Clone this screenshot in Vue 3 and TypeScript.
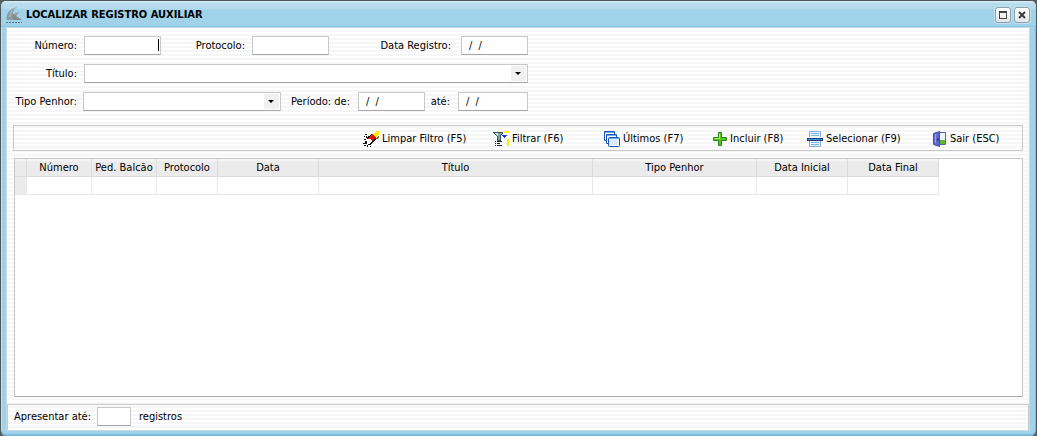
<script setup lang="ts">
interface Mask { id: string; label: string }
interface Column { name: string; width: number }

const columns: Column[] = [
  { name: 'Número', width: 65 },
  { name: 'Ped. Balcão', width: 65 },
  { name: 'Protocolo', width: 61 },
  { name: 'Data', width: 101 },
  { name: 'Título', width: 274 },
  { name: 'Tipo Penhor', width: 164 },
  { name: 'Data Inicial', width: 91 },
  { name: 'Data Final', width: 91 },
]
const periods: Mask[] = [
  { id: 'from', label: 'Período: de:' },
  { id: 'to', label: 'até:' },
]
</script>

<template>
  <main class="window">
    <header class="titlebar">
      <svg class="logo" width="18" height="18" viewBox="0 0 18 18" aria-hidden="true">
        <path d="M2 14C0 9 5 2 12 1C7 5 6 10 12 14Z" fill="#8e9ba1" />
        <path d="M5 11C5 6 8 3 12 1" fill="none" stroke="#b9c0c2" />
        <path d="M8 8l6-2-3 4 6 4H9C7 12 7 10 8 8Z" fill="#858a8c" />
        <path d="M9 9l4-2" stroke="#b8aaa2" />
        <path d="M1 16.500h16" stroke="#5f737c" stroke-dasharray="2 1" />
      </svg>
      <h1>LOCALIZAR REGISTRO AUXILIAR</h1>
      <button class="control" type="button" aria-label="Maximizar">
        <svg width="8" height="8" viewBox="0 0 8 8" shape-rendering="crispEdges"><path d="M.5.5h7v7h-7zM0 1.5h8" fill="none" stroke="#444" /></svg>
      </button>
      <button class="control" type="button" aria-label="Fechar">
        <svg width="8" height="8" viewBox="0 0 8 8"><path d="M1 1l6 6M7 1l-6 6" stroke="#3c3c3c" stroke-width="2" /></svg>
      </button>
    </header>

    <div class="body">
      <form class="filters" @submit.prevent>
        <div class="line">
          <label class="first" for="number">Número:</label>
          <span class="number"><input id="number" type="text"><i class="caret"></i></span>
          <label class="protocol-label" for="protocol">Protocolo:</label>
          <input id="protocol" class="protocol" type="text">
          <label class="date-label" for="date">Data Registro:</label>
          <input id="date" class="mask" type="text" value="/  /">
        </div>
        <div class="line">
          <label class="first" for="title">Título:</label>
          <span class="combo wide"><select id="title"><option></option></select></span>
        </div>
        <div class="line penhor">
          <label class="first" for="kind">Tipo Penhor:</label>
          <span class="combo kind"><select id="kind"><option></option></select></span>
          <template v-for="p in periods" :key="p.id">
            <label :class="p.id" :for="p.id">{{ p.label }}</label>
            <input :id="p.id" class="mask" type="text" value="/  /">
          </template>
        </div>
      </form>

      <div class="toolbar">
        <button class="clear" type="button">
          <svg width="16" height="16" viewBox="0 0 16 16" shape-rendering="crispEdges">
            <path d="M10 4l3-4h3v3l-3 4Z" fill="#ffee00" />
            <path d="M13 8l3-4v2l-2 3Z" fill="#6b5b00" />
            <path d="M5 7l5-4 3 4-5 4Z" fill="#e01010" />
            <path d="M4 8h3l2 2-2 4H5L3 11Z" fill="#fff" />
            <path d="M4 7.500L9.500 2.500M7 13.500l6-6M5 13.500h2" fill="none" stroke="#111" />
            <path d="M2 3h2v1H2zM1 5h1v1H1zM3 5h1v2H3zM1 8h2v1H1zM2 10h2v3H2zM0 12h2v1H0zM1 14h2v1H1zM4 14h1v2H4zM7 15h1v1H7z" fill="#111" />
          </svg>Limpar Filtro (F5)
        </button>
        <button class="filter" type="button">
          <svg width="16" height="16" viewBox="0 0 16 16" shape-rendering="crispEdges">
            <path d="M0 1h10L7 5v4H4V5Z" fill="#7aa3a3" />
            <path d="M2 2h3v4L2 3Z" fill="#d5e8e8" />
            <path d="M0 1.500h10M1 2l3 3v4h3V5l3-3" fill="none" stroke="#385858" />
            <path d="M9 4h5v1h-1v1h-1v1h-1V6h-1V5H9Z" fill="#2b3cc4" />
            <path d="M11 0h5v2h-5zM14 8h2v7h-2z" fill="#fff000" />
            <path d="M2 10.500h1M4 10.500h5M2 12.500h1M4 12.500h3M2 14.500h1M4 14.500h5" stroke="#222" />
          </svg>Filtrar (F6)
        </button>
        <button class="latest" type="button">
          <svg width="16" height="16" viewBox="0 0 16 16">
            <path d="M2 9.500H.5v-9h10V3" fill="#fff" stroke="#1c56b4" />
            <path d="M4 12.500H2.500v-9h10V6" fill="#fff" stroke="#1c56b4" />
            <path d="M1 1.500h9M3 4.500h9" stroke="#6aaced" />
            <rect x="4.500" y="6.500" width="11" height="9" rx="1" fill="#dcecff" stroke="#1c56b4" />
            <path d="M5 7.500h10" stroke="#6aaced" />
            <path d="M6 14.500h8V9" fill="none" stroke="#fff" />
          </svg>Últimos (F7)
        </button>
        <button class="add" type="button">
          <svg width="14" height="14" viewBox="0 0 14 14">
            <path d="M5.500.500h3v5h5v3h-5v5h-3v-5h-5v-3h5Z" fill="#57c51c" stroke="#248519" stroke-linejoin="round" />
            <path d="M6.500 1.500v5h-5" fill="none" stroke="#b2ef78" />
          </svg>Incluir (F8)
        </button>
        <button class="choose" type="button">
          <svg width="16" height="16" viewBox="0 0 16 16">
            <path d="M2.500 6V.500h11V6M2.500 10v5.500h11V10" fill="#e9f4ff" stroke="#85addf" />
            <path d="M4 2.500h8M4 4.500h8M4 11.500h8M4 13.500h8" stroke="#70b9ee" />
            <path d="M0 7h16v3H0z" fill="#123c7c" /><path d="M1 8.500h14" stroke="#4f91d3" />
          </svg>Selecionar (F9)
        </button>
        <button class="leave" type="button">
          <svg width="14" height="16" viewBox="0 0 14 16">
            <path d="M5.500 1.500h7v12h-7z" fill="#e9f5ff" stroke="#5260bd" />
            <path d="M7 9h5v4H7z" fill="#5cb82e" />
            <path d="M.500 2.500l6-2v15l-6-2Z" fill="#6268d2" stroke="#4b49ad" />
            <path d="M2 4l1-1v9H2Z" fill="#9ba1f2" /><path d="M5 7v3" stroke="#20205e" />
          </svg>Sair (ESC)
        </button>
      </div>

      <div class="results">
        <table>
          <colgroup><col class="marker"><col v-for="c in columns" :key="c.name" :style="{ width: c.width + 'px' }"></colgroup>
          <thead><tr><th></th><th v-for="c in columns" :key="c.name" scope="col">{{ c.name }}</th></tr></thead>
          <tbody><tr><th></th><td v-for="c in columns" :key="c.name"></td></tr></tbody>
        </table>
      </div>

      <footer>
        <label for="limit">Apresentar até:</label>
        <input id="limit" class="limit" type="text">
        <span>registros</span>
      </footer>
    </div>
  </main>
</template>

<style>
body { margin: 0; background: #5a5e61; }
</style>

<style scoped>
* { box-sizing: border-box; }
.window {
  height: 100vh;
  display: flex;
  flex-direction: column;
  padding: 0 6px 5px 5px;
  border: 1px solid #50575b;
  border-bottom: 0;
  border-radius: 6px;
  background: #a0d3e9;
  box-shadow: inset 1px 1px #c3e3f0, inset -1px 0 #79bddd, inset 0 -2px #79bddd;
  color: #000;
  font: 11px/14px "DejaVu Sans Condensed", "DejaVu Sans", sans-serif;
}
.titlebar {
  flex: none;
  height: 26px;
  display: flex;
  align-items: center;
  gap: 3px;
  margin: 0 -6px 0 -5px;
  padding: 1px 6px 0 4px;
  border-radius: 5px 5px 0 0;
  background: linear-gradient(#d5ebf4 0 1px, #b7dced 2px 7px, #a0d3e9 9px 24px, #83c5e2 26px);
}
.logo { flex: none; }
h1 { flex: 1; margin: 0; font-size: 11px; line-height: 14px; }
.control {
  width: 16px;
  height: 16px;
  display: grid;
  place-items: center;
  padding: 0;
  border: 1px solid #8aa1ac;
  border-radius: 3px;
  background: linear-gradient(#fff, #e3e7e9);
  box-shadow: 0 0 0 1px #c2e1ee;
}
.body {
  flex: 1;
  min-height: 0;
  display: flex;
  flex-direction: column;
  border: 1px solid #c9d9df;
  background: repeating-linear-gradient(#fff 0 2px, #f6f6f6 2px 4px);
}
.filters { flex: none; padding: 8px 0 0; }
.line { display: flex; align-items: center; height: 19px; margin-bottom: 9px; white-space: nowrap; }
label { text-align: right; }
.first { width: 70px; margin-right: 7px; }
.penhor .first { margin-right: 6px; }
input, .combo {
  height: 19px;
  border: 1px solid #c8c8c8;
  border-bottom-color: #a7a7a7;
  background: #fff;
}
input { min-width: 0; margin: 0; padding: 0 7px; border-radius: 0; outline: 0; font: inherit; color: #000; }
.number { position: relative; width: 77px; display: flex; }
.number input { width: 100%; }
.caret { position: absolute; right: 2px; top: 3px; width: 1px; height: 12px; background: #000; }
.protocol-label { width: 84px; margin-right: 7px; }
.protocol { width: 77px; }
.date-label { width: 122px; margin-right: 10px; }
.mask { width: 67px; white-space: pre; }
#to { width: 70px; }
.combo { position: relative; display: flex; }
.combo::after {
  content: "";
  position: absolute;
  right: 6px;
  top: 7px;
  border: 3px solid transparent;
  border-top: 3px solid #000;
  border-bottom: 0;
  pointer-events: none;
}
select {
  width: 100%;
  appearance: none;
  margin: 0;
  border: 1px solid #fff;
  border-radius: 0;
  outline: 0;
  background: linear-gradient(#f0f0f0, #f0f0f0) right / 15px 100% no-repeat #fff;
  font: inherit;
}
.wide { width: 444px; }
.kind { width: 198px; }
.from { width: 69px; margin-right: 8px; }
.to { width: 25px; margin-right: 8px; }
.toolbar {
  flex: none;
  height: 26px;
  display: flex;
  justify-content: flex-end;
  align-items: center;
  margin: 5px 6px 7px;
  padding: 2px 8px 0 0;
  border: 1px solid #c8c8c8;
}
.toolbar button {
  display: flex;
  align-items: center;
  gap: 3px;
  padding: 0;
  border: 0;
  background: none;
  color: #000;
  font: inherit;
  white-space: nowrap;
}
.toolbar svg { flex: none; }
.clear { width: 130px; }
.filter { width: 111px; }
.latest { width: 109px; }
.add { width: 94px; }
.choose { width: 126px; }
.leave { width: 81px; }
.results {
  flex: 1;
  min-height: 0;
  overflow: hidden;
  margin: 0 6px 7px 7px;
  border: 1px solid #c8c8c8;
  border-bottom-color: #a7a7a7;
  background: #fff;
}
table { width: 924px; table-layout: fixed; border-collapse: separate; border-spacing: 0; }
.marker { width: 12px; }
th, td { height: 18px; padding: 0; border: solid #e9e9e9; border-width: 0 1px 1px 0; white-space: nowrap; }
th { font-weight: normal; background: #ebebeb; }
thead th { padding-top: 1px; border-color: #dcdcdc; background: linear-gradient(#f6f6f6 0 1px, #ebebeb 3px); }
footer {
  flex: none;
  display: flex;
  align-items: center;
  height: 26px;
  padding: 0 6px 2px;
  border: solid #c8c8c8;
  border-width: 1px 1px 0;
}
.limit { width: 34px; margin: 0 8px 0 6px; }
</style>
